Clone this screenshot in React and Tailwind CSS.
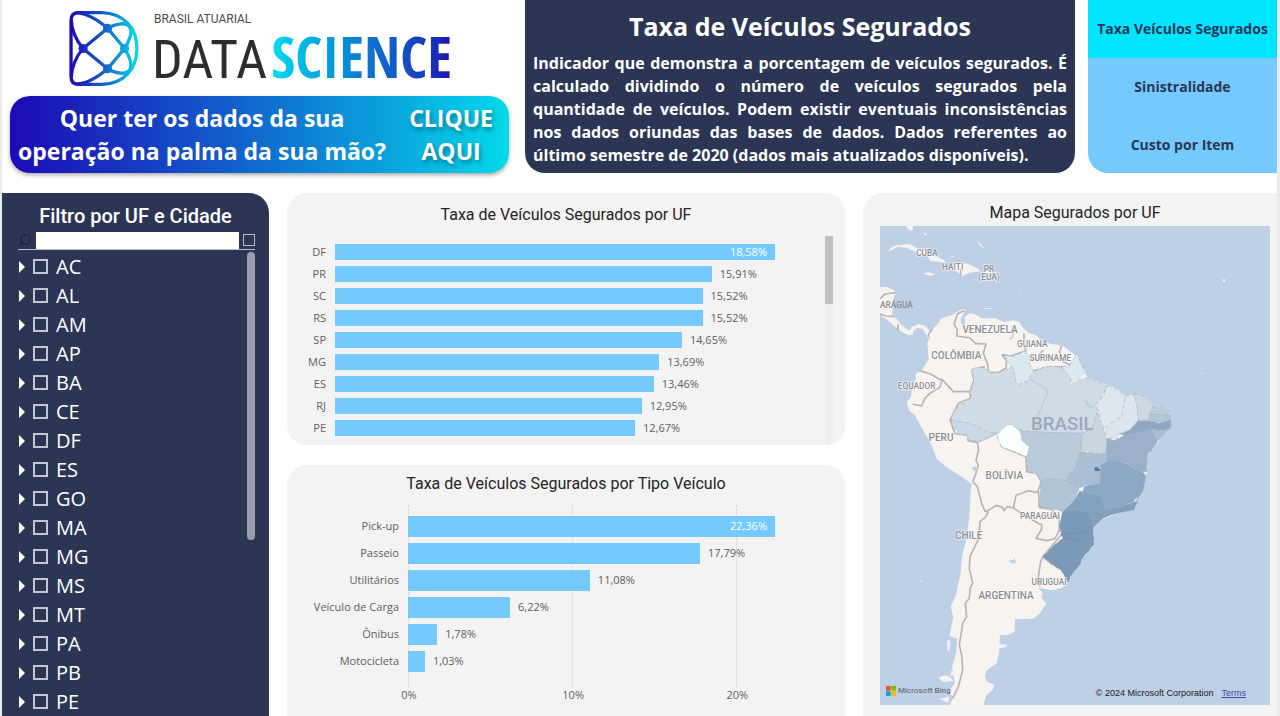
import React from "react";
import { Search } from "lucide-react";

const ufs = ["AC", "AL", "AM", "AP", "BA", "CE", "DF", "ES", "GO", "MA", "MG", "MS", "MT", "PA", "PB", "PE"];

const byUf = [
  ["DF", 18.58], ["PR", 15.91], ["SC", 15.52], ["RS", 15.52], ["SP", 14.65],
  ["MG", 13.69], ["ES", 13.46], ["RJ", 12.95], ["PE", 12.67],
];

const byType = [
  ["Pick-up", 22.36], ["Passeio", 17.79], ["Utilitários", 11.08],
  ["Veículo de Carga", 6.22], ["Ônibus", 1.78], ["Motocicleta", 1.03],
];

const format = (v) => v.toFixed(2).replace(".", ",") + "%";

function LogoMark() {
  return (
    <svg viewBox="24 12 220 236" className="h-[77px] w-[72px] shrink-0" fill="none" stroke="url(#mark)" strokeWidth="10" strokeLinecap="round">
      <defs>
        <linearGradient id="mark" gradientUnits="userSpaceOnUse" x1="30" y1="0" x2="238" y2="0">
          <stop offset="0" stopColor="#1f08b4" />
          <stop offset="0.5" stopColor="#1560c8" />
          <stop offset="1" stopColor="#05dcec" />
        </linearGradient>
      </defs>
      <path d="M33 44Q33 20 56 20H128C195 22 235 68 235 130S195 238 128 240H56Q33 240 33 216Z" />
      <path d="M34 216C34 190 48 154 70 130L145 68C172 52 204 48 214 66C222 84 212 106 197 130L145 192C112 220 80 238 50 239" />
      <path d="M34 44C34 70 48 106 70 130L145 192C172 208 204 212 214 194C222 176 212 154 197 130L145 68C112 40 80 22 50 21" />
      <g fill="url(#mark)" stroke="none">
        <circle cx="145" cy="68" r="14" />
        <circle cx="70" cy="130" r="14" />
        <circle cx="145" cy="192" r="14" />
        <circle cx="197" cy="130" r="14" />
      </g>
    </svg>
  );
}

function Brand() {
  return (
    <div className="flex min-w-0 flex-col gap-[9px] pr-4 pl-2 pt-[10px]">
      <div className="flex h-[77px] items-start gap-3 pl-[58px]">
        <LogoMark />
        <div className="flex flex-col pt-[2px] whitespace-nowrap">
          <span className="ml-[2px] font-['Roboto',sans-serif] text-[12px] leading-[14px] text-[#4a4a4a]">BRASIL ATUARIAL</span>
          <span className="flex items-baseline gap-1 leading-[60px]">
            <span className="font-['Roboto_Condensed',sans-serif] text-[54px] text-[#2d2d2d]">DATA</span>
            <span className="bg-gradient-to-r from-[#05dcec] via-[#0f7ad2] to-[#1f08b4] bg-clip-text font-['Open_Sans_Condensed','Roboto_Condensed',sans-serif] text-[58px] font-bold text-transparent">SCIENCE</span>
          </span>
        </div>
      </div>
      <a href="#contato" className="flex h-[77px] items-center justify-between rounded-[20px] bg-[linear-gradient(90deg,#1d0ab4,#1160cb_45%,#03d9ea)] pr-4 pl-2 text-center font-['Open_Sans',sans-serif] text-[23px] leading-[33px] font-bold whitespace-nowrap text-white shadow-[0_2px_4px_rgba(0,0,0,0.35)]">
        <span>Quer ter os dados da sua<br />operação na palma da sua mão?</span>
        <span className="[text-shadow:2px_3px_4px_rgba(0,0,0,0.35)]">CLIQUE<br />AQUI</span>
      </a>
    </div>
  );
}

function Sidebar() {
  return (
    <aside className="flex flex-col rounded-tr-[20px] bg-[#2c3553] pt-3 text-white">
      <h2 className="text-center font-['Roboto',sans-serif] text-[20px] leading-[22px] font-medium">Filtro por UF e Cidade</h2>
      <div className="mr-[14px] ml-4 mt-1 flex h-[19px] items-center gap-1 border-b border-[#b9bcc6]">
        <Search className="size-[14px] shrink-0 -scale-x-100 text-[#1b2136]" strokeWidth={2} />
        <input type="search" aria-label="Pesquisar" className="h-[17px] min-w-0 flex-1 bg-white px-1 text-xs text-black outline-none" />
        <button type="button" aria-label="Limpar seleção" className="size-3 shrink-0 border border-[#b9bcc6]" />
      </div>
      <div className="flex flex-1 pr-[14px] pl-4 pt-[2px]">
        <ul className="flex flex-1 flex-col">
          {ufs.map((uf) => (
            <li key={uf} className="flex min-h-7 flex-1 items-center">
              <button type="button" aria-label={"Expandir " + uf} className="mr-[7px] w-2">
                <svg viewBox="0 0 6 12" className="ml-px h-3 w-[6px]" fill="#fff"><path d="M0 0L6 6L0 12Z" /></svg>
              </button>
              <label className="flex items-center gap-2 font-['Open_Sans',sans-serif] text-[20px] leading-6">
                <input type="checkbox" className="size-[15px] appearance-none border-2 border-[#c3c7d2] checked:bg-white" />
                {uf}
              </label>
            </li>
          ))}
        </ul>
        <div className="h-[288px] w-2 rounded-full bg-[#9a9eac]" />
      </div>
    </aside>
  );
}

function Bar({ value, max, className }) {
  const inside = value === max;
  return (
    <div className="flex flex-1 items-center gap-2 whitespace-nowrap">
      <div className={"flex shrink-0 items-center justify-end bg-[#74caff] " + className} style={{ width: (value / max) * 100 + "%" }}>
        {inside && <span className="pr-2 text-white">{format(value)}</span>}
      </div>
      {!inside && <span>{format(value)}</span>}
    </div>
  );
}

const chartTitle = "text-center font-['Roboto',sans-serif] text-[16px] leading-[22px] text-[#252423]";

function UfChart() {
  return (
    <section className="flex h-[252px] flex-col overflow-hidden rounded-[20px] bg-[#f3f3f3] pt-[11px]">
      <h2 className={chartTitle}>Taxa de Veículos Segurados por UF</h2>
      <div className="mt-[10px] flex flex-1 pr-3">
        <ul className="flex-1 pt-[5px] pr-[50px] font-['Open_Sans',sans-serif] text-[11px] text-[#605e5c]">
          {byUf.map(([name, value]) => (
            <li key={name} className="flex h-[22px] items-center gap-[9px]">
              <span className="w-[39px] shrink-0 text-right">{name}</span>
              <Bar value={value} max={18.58} className="h-4" />
            </li>
          ))}
        </ul>
        <div className="w-2 bg-[#eeeeee]"><div className="h-[68px] bg-[#bfbfbf]" /></div>
      </div>
    </section>
  );
}

function TypeChart() {
  return (
    <section className="flex-1 rounded-t-[20px] bg-[#f3f3f3] pt-2">
      <h2 className={chartTitle}>Taxa de Veículos Segurados por Tipo Veículo</h2>
      <div className="relative mt-[10px] pr-[70px] font-['Open_Sans',sans-serif] text-[11px] text-[#605e5c]">
        <div className="absolute inset-y-0 right-[70px] left-[121px]">
          {[0, 10, 20].map((t) => (
            <div key={t} className="absolute inset-y-0 border-l border-dotted border-[#d0d0d0]" style={{ left: (t / 22.36) * 100 + "%" }}>
              <span className="absolute top-full -translate-x-1/2 text-[11px] leading-4">{t}%</span>
            </div>
          ))}
        </div>
        <ul className="relative pt-2 pb-3">
          {byType.map(([name, value]) => (
            <li key={name} className="flex h-[27px] items-center gap-[9px]">
              <span className="w-28 shrink-0 text-right">{name}</span>
              <Bar value={value} max={22.36} className="h-[21px]" />
            </li>
          ))}
        </ul>
      </div>
    </section>
  );
}

const states = [
  ["#d2dce6", "M305 58L320 52L345 55L358 68L385 68L405 62L425 48L432 70L440 100L470 98L478 85L535 120L520 160L505 195L500 246L380 248L350 252L300 222L242 210L250 190L265 165L305 150L300 130L312 90Z"],
  ["#c9d9e6", "M242 210L300 220L360 248L380 250L345 268L325 275L295 270L293 255L268 253L255 235Z"],
  ["#dce8f0", "M403 15L430 20L450 10L465 3L478 20L480 45L492 65L474 92L440 106L430 55L412 35Z"],
  ["#cfdce6", "M492 65L520 52L550 48L580 54L595 75L605 102L640 85L665 85L712 110L690 150L676 168L688 190L665 240L635 250L500 246L505 195L535 120L478 85Z"],
  ["#dde9f1", "M575 50L600 45L612 25L622 10L630 35L645 65L612 104L598 80Z"],
  ["#dfe6ee", "M712 105L740 118L765 138L768 165L755 200L720 225L712 240L692 218L688 185L676 165L700 140Z"],
  ["#dde4ed", "M765 138L790 132L800 160L805 210L780 240L750 250L740 270L718 262L705 240L720 222L755 200Z"],
  ["#cdd8e2", "M790 132L825 140L852 168L838 190L835 212L805 210L800 160Z"],
  ["#bccbd9", "M850 168L875 170L895 180L902 197L838 195Z"],
  ["#b3c4d5", "M838 193L903 195L903 213L870 218L838 212Z"],
  ["#8fa8c2", "M805 212L835 212L870 220L903 210L902 235L880 242L845 238L805 247L770 257L750 252L780 240Z"],
  ["#a9bdd2", "M848 240L870 240L895 238L872 265L858 275L848 260Z"],
  ["#9ab0c8", "M712 264L735 272L770 252L845 237L850 258L862 275L845 302L833 310L830 365L815 365L760 335L715 345L706 310Z"],
  ["#c8d6e1", "M680 188L695 220L710 262L708 312L690 312L633 300L635 250L665 240Z"],
  ["#b9cbda", "M445 240L500 246L635 250L633 305L610 355L588 392L530 385L512 395L505 375L470 362L468 320L478 290L455 275Z"],
  ["#fcfdfe", "M383 252L405 230L420 222L436 232L452 246L456 272L478 290L470 320L430 304L395 290L385 272Z"],
  ["#aabfd4", "M633 305L690 312L712 310L712 338L692 345L690 400L650 405L625 415L588 392L612 355Z"],
  ["#b1c5d9", "M512 395L530 385L588 392L628 415L610 455L575 484L545 475L510 470Z"],
  ["#8ea9c3", "M692 345L715 333L760 337L815 365L820 390L805 400L805 435L790 455L745 475L705 484L690 440L635 430L645 408L690 400Z"],
  ["#8ca7c2", "M818 365L828 378L820 420L800 452L803 400Z"],
  ["#7f9fbf", "M803 452L792 480L740 490L712 498L705 482L745 473Z"],
  ["#83a0bf", "M630 422L640 430L690 436L706 482L735 488L700 505L670 532L655 500L615 480L578 484L610 455Z"],
  ["#7b99ba", "M578 484L615 479L645 484L660 500L670 528L669 560L580 560L568 530Z"],
];

function Coast() {
  return (
    <g>
      <path d="M30 292L48 290L76 303L72 325L70 345L66 378L80 386L94 405L118 422L126 410L146 402L166 408L186 430L190 415L205 400L214 385L245 376L270 360L285 356L283 366L272 386L274 404L286 402L284 382L300 368L322 376L332 385L376 385L402 396L430 391L450 397L456 410L476 428L500 437L522 455L546 463L575 465L604 486L618 498L630 520L645 546L655 570L666 564L692 578L716 586L742 597L766 618L790 611L826 620L852 646L876 650L896 660L904 680L902 712L872 745L850 778L834 792L832 836L828 862L820 900L802 930L792 960L742 970L702 986L670 1012L670 1060L642 1092L630 1125L602 1156L592 1178L580 1192L550 1201L520 1196L504 1192L518 1208L514 1224L529 1240L510 1270L490 1286L435 1287L434 1325L415 1334L390 1336L388 1362L410 1364L410 1370L388 1376L386 1394L380 1420L348 1442L345 1460L352 1476L373 1484L368 1500L350 1515L340 1545H240L250 1522L236 1504L255 1478L246 1430L258 1390L262 1346L238 1338L250 1280L242 1250L258 1214L272 1150L276 1100L289 1048L298 985L302 905L305 881L268 856L230 832L200 806L185 766L160 722L135 676L118 662L110 637L122 622L128 588L138 566L136 552L156 540L176 508L172 458L182 438L172 440L160 418L144 413L132 420L128 434L114 436L92 424L74 409L52 390L36 380L30 370Z" />
      <path d="M55 185Q64 166 86 165L118 162L136 172L168 182L192 196L222 210L226 218L180 212L172 196L142 188L112 174L84 170Z" />
      <path d="M240 236L252 222L290 220L320 234L332 244L300 248L278 258L258 244Z" />
      <path d="M160 250L178 247L194 253L180 258Z" />
      <path d="M345 244L366 245L366 252L346 252Z" />
      <path d="M108 108H130L126 124L112 118Z" />
      <path d="M164 128l6 2l-2 8l-5-3ZM320 152l12 10l10 12l-4-1l-12-12ZM236 198l16 1v3ZM340 354h26v2h-26ZM1058 268l8 0l-2 8l-5-2ZM446 300l6 2l-4 2ZM992 548l8 1l-3 3ZM148 1172l10 0l-5 3Z" />
      <path d="M232 1350l10 2l-4 30l-6-2ZM205 1464l18-8l16 4l12 12l-30 4ZM244 1440l10 14l-12 4ZM210 1526l28-6l-4 18Z" />
    </g>
  );
}

function Label({ x, y, size = 30, fill = "#8d8d92", children }) {
  return (
    <text x={x} y={y} fontSize={size} fill={fill} fontWeight="500" textAnchor="middle" stroke="#fff" strokeOpacity="0.65" strokeWidth="5" paintOrder="stroke" fontFamily="Roboto, sans-serif">
      {children}
    </text>
  );
}

function MapCard() {
  return (
    <section className="flex flex-col rounded-tl-[20px] bg-[#f3f3f3] pt-[10px] pr-[7px] pb-[11px] pl-[17px]">
      <h2 className="text-center font-['Roboto',sans-serif] text-[16px] leading-5 text-[#252423]">Mapa Segurados por UF</h2>
      <div className="relative mt-[3px] flex-1 overflow-hidden bg-[#bdd0e5]">
        <svg viewBox="30 108 1170 1437" preserveAspectRatio="xMidYMid slice" className="absolute inset-0 size-full" role="img" aria-label="Mapa de segurados por UF">
          <g fill="#f6f3f1"><Coast /></g>
          <g fill="none" stroke="#b9b5b4" strokeWidth="5" strokeLinejoin="round">
            <path d="M30 326L46 312L76 308M30 372L48 378L70 380M84 402V424M182 420L174 438M282 362L262 372L252 402L262 418L260 438L300 444L316 460L348 462L340 490L352 520L356 545M320 535L345 530M396 494L420 498L446 490L468 482L462 468M462 430V452M396 494L410 512L408 534L385 548L358 548M520 480L508 494L514 505L478 510L474 528L484 548M575 466L568 486L580 516L606 526L618 498M484 545L530 532L580 530M272 238V256" />
            <g transform="translate(0 480)">
              <path d="M148 62L182 72L208 88L216 88L250 125L300 125L302 145L265 160L240 210L255 250L295 256L294 272L322 277L380 250M216 88L210 112L180 130L164 146L155 168L128 162M305 60L312 90L300 125M305 60L340 55M322 277L326 300L318 330L325 345L318 370L308 395M308 395L322 410L335 460L345 484L355 482L378 466L398 472L402 482L412 470L430 474L438 436L475 422L502 428L514 395L500 370L470 365L468 320L395 290L383 255M355 484L348 500L330 515L328 550L324 575M430 474L470 500L505 520L516 525L514 540L498 565L530 572L555 566L568 540V510L545 478L508 472L506 425" />
            </g>
            <g transform="translate(0 990)">
              <path d="M324 60L300 110L298 145L308 190L300 205L298 235L286 250L290 290L278 310L272 350L268 375L275 405L278 450L265 500L248 535M568 30L578 40L520 108L512 125L505 170L510 200M520 112L545 132L575 150L590 170" />
            </g>
          </g>
          <g transform="translate(0 480)" stroke="#97a9bd" strokeOpacity="0.75" strokeWidth="2" strokeDasharray="14 7">
            {states.map(([color, d], i) => <path key={i} d={d} fill={color} />)}
            <path d="M674 352H686V357H690V363H674Z" fill="#55799f" stroke="none" />
            <path d="M640 150l10 0l6 12l14 8l-2 8l-16-10Z" fill="#bdd0e5" stroke="none" />
            <path d="M305 352l12-2l6 12l-10 2Z" fill="#bdd0e5" stroke="none" />
          </g>
          <g transform="translate(0 990)" fill="#7b99b9" stroke="#6986a8" strokeWidth="2" strokeDasharray="14 7">
            <path d="M572 42L640 38L669 40L671 72L655 92L620 64L580 56Z" />
            <path d="M520 110L550 78L580 54L625 62L656 92L640 108L628 136L602 166L594 186L574 150L546 130Z" />
            <path d="M415 122L430 120L434 112L438 130L424 130Z" fill="#bdd0e5" stroke="none" />
          </g>
          <path d="M418 448L428 440L430 428L424 424" fill="none" stroke="#bdd0e5" strokeWidth="5" />
          <Label x="171" y="197" size="25">CUBA</Label>
          <Label x="248" y="241" size="25">HAITI</Label>
          <Label x="357" y="245" size="25">PR</Label>
          <Label x="357" y="270" size="25">(EUA)</Label>
          <text x="30" y="353" fontSize="25" fontWeight="500" fill="#8d8d92" fontFamily="Roboto, sans-serif">ARÁGUA</text>
          <Label x="360" y="430">VENEZUELA</Label>
          <Label x="487" y="472" size="25">GUIANA</Label>
          <Label x="541" y="514" size="25">SURINAME</Label>
          <Label x="259" y="507">COLÔMBIA</Label>
          <Label x="140" y="598" size="25">EQUADOR</Label>
          <Label x="213" y="753">PERU</Label>
          <Label x="403" y="867">BOLÍVIA</Label>
          <Label x="510" y="986" size="25">PARAGUAI</Label>
          <Label x="296" y="1046">CHILE</Label>
          <Label x="537" y="1184" size="25">URUGUAI</Label>
          <Label x="408" y="1226">ARGENTINA</Label>
          <text x="577" y="719" fontSize="56" fontWeight="500" fill="#99a9ba" textAnchor="middle" fontFamily="Roboto, sans-serif">BRASIL</text>
        </svg>
        <div className="absolute bottom-2 left-[6px] flex items-center gap-[2px] font-['Roboto',sans-serif] text-[8px] leading-3 font-medium text-[#6d7177]">
          <svg viewBox="0 0 10 10" className="size-[10px]">
            <path fill="#f25022" d="M0 0h4.7v4.7H0z" /><path fill="#7fba00" d="M5.3 0H10v4.7H5.3z" />
            <path fill="#00a4ef" d="M0 5.3h4.7V10H0z" /><path fill="#ffb900" d="M5.3 5.3H10V10H5.3z" />
          </svg>
          Microsoft Bing
        </div>
        <div className="absolute right-6 bottom-[6px] flex gap-2 font-['Liberation_Sans',sans-serif] text-[9px] leading-3 text-[#1a1a1a]">
          <span>© 2024 Microsoft Corporation</span>
          <a href="#terms" className="text-[#3a4aa8] underline">Terms</a>
        </div>
      </div>
    </section>
  );
}

export default function App() {
  return (
    <div className="flex min-h-screen flex-col gap-5 border-r-[3px] border-l-2 border-[#ebebeb] bg-white">
      <header className="grid grid-cols-[523fr_550fr_202fr]">
        <Brand />
        <section className="min-w-0 rounded-b-[20px] bg-[#2c3553] px-2 pt-[10px] pb-[6px] font-['Open_Sans',sans-serif] font-bold text-white">
          <h1 className="text-center text-[25px] leading-8">Taxa de Veículos Segurados</h1>
          <p className="mt-[10px] text-justify text-[16px] leading-[23px]">
            Indicador que demonstra a porcentagem de veículos segurados. É calculado dividindo o número de veículos segurados pela quantidade de veículos. Podem existir eventuais inconsistências nos dados oriundas das bases de dados. Dados referentes ao último semestre de 2020 (dados mais atualizados disponíveis).
          </p>
        </section>
        <nav className="ml-[13px] flex min-w-0 flex-col overflow-hidden rounded-bl-[20px] bg-[#74caff] font-['Open_Sans',sans-serif] text-[14px] font-bold whitespace-nowrap text-[#2c3553]">
          <button type="button" className="flex-1 bg-[#00e5ff]">Taxa Veículos Segurados</button>
          <button type="button" className="flex-1">Sinistralidade</button>
          <button type="button" className="flex-1">Custo por Item</button>
        </nav>
      </header>
      <main className="grid flex-1 grid-cols-[267fr_558fr_414fr] gap-[18px]">
        <Sidebar />
        <div className="flex flex-col gap-5">
          <UfChart />
          <TypeChart />
        </div>
        <MapCard />
      </main>
    </div>
  );
}
